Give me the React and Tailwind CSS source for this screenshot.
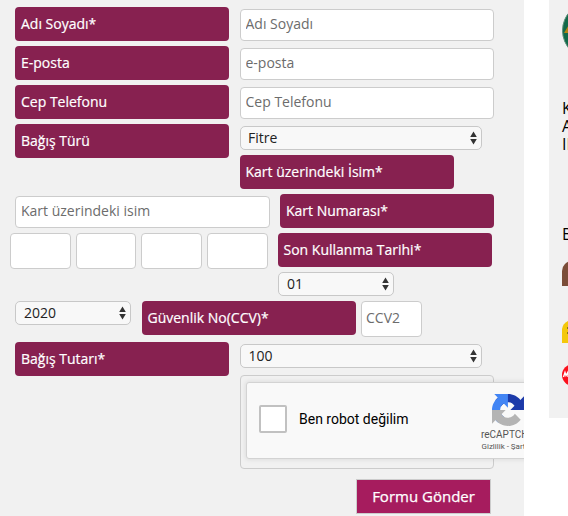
import clsx from "clsx";

function Label({ children, className }) {
  return (
    <label
      className={clsx(
        "block h-[34px] w-[214px] shrink-0 rounded-[4px] bg-[#872150] text-[14px] leading-[33px] text-white [-webkit-text-stroke:0.2px_white]",
        className
      )}
    >
      {children}
    </label>
  );
}

function Input({ className, placeholder }) {
  return (
    <input
      type="text"
      placeholder={placeholder}
      className={clsx(
        "block shrink-0 rounded-[4px] border border-[#ccc] bg-white pb-[3px] text-[14px] placeholder:text-[#6c6c6c] focus:outline-none",
        className
      )}
    />
  );
}

function Select({ value, className }) {
  return (
    <button
      type="button"
      className={clsx(
        "flex h-6 shrink-0 items-center justify-between rounded-[5px] border border-[#c8c8c8] bg-[#f8f8f8] pr-1 text-[14px] leading-[22px] text-[#222]",
        className
      )}
    >
      <span>{value}</span>
      <svg width="7" height="14" viewBox="0 0 7 14" fill="#333">
        <path d="M3.5 .6L6.8 6H.2zM3.5 13.4L6.8 8H.2z" />
      </svg>
    </button>
  );
}

function RecaptchaLogo() {
  return (
    <svg width="32" height="32" viewBox="0 0 64 64">
      <path
        fill="#1c3aa9"
        d="M64 31.955l-.033-1.37V4.687l-7.16 7.16C50.948 4.674 42.033.093 32.05.093c-10.4 0-19.622 4.96-25.458 12.64l11.736 11.86a15.55 15.55 0 0 1 4.754-5.334c2.05-1.6 4.952-2.906 8.968-2.906.485 0 .86.057 1.135.163 4.976.393 9.288 3.14 11.828 7.124l-8.307 8.307L64 31.953"
      />
      <path
        fill="#4285f4"
        d="M31.862.094l-1.37.033H4.594l7.16 7.16C4.58 13.147 0 22.06 0 32.046c0 10.4 4.96 19.622 12.64 25.458L24.5 45.768a15.55 15.55 0 0 1-5.334-4.754c-1.6-2.05-2.906-4.952-2.906-8.968 0-.485.057-.86.163-1.135.393-4.976 3.14-9.288 7.124-11.828l8.307 8.307L31.86.095"
      />
      <path
        fill="#b4b4b4"
        d="M.001 32.045l.033 1.37v25.898l7.16-7.16c5.86 7.173 14.774 11.754 24.76 11.754 10.4 0 19.622-4.96 25.458-12.64l-11.736-11.86a15.55 15.55 0 0 1-4.754 5.334c-2.05 1.6-4.952 2.906-8.968 2.906-.485 0-.86-.057-1.135-.163-4.976-.393-9.288-3.14-11.828-7.124l8.307-8.307c-10.522.04-22.4.066-27.295-.005"
      />
    </svg>
  );
}

function Recaptcha() {
  return (
    <div className="flex h-[77px] w-[304px] rounded-[3px] border border-[#d3d3d3] bg-[#f9f9f9] font-[Roboto,sans-serif] shadow-[0_0_4px_1px_rgba(0,0,0,0.08)]">
      <div className="mt-[22px] ml-3 size-7 shrink-0 rounded-[2px] border-2 border-[#c1c1c1] bg-white" />
      <span className="mt-[28px] ml-3 w-[167px] shrink-0 text-[14px] leading-[17px] text-black">
        Ben robot değilim
      </span>
      <div className="flex w-[84px] shrink-0 flex-col items-center pt-[11px] text-[#555]">
        <RecaptchaLogo />
        <span className="mt-[2px] text-[10px] leading-[14px]">reCAPTCHA</span>
        <span className="text-[8px] leading-[10px] whitespace-nowrap">Gizlilik - Şartlar</span>
      </div>
    </div>
  );
}

function DonationForm() {
  return (
    <form className="h-[516px] w-[524px] shrink-0 overflow-hidden bg-[#f1f1f1] pt-[7px]">
      <div className="flex flex-col gap-[5px] pl-[15px]">
        <div className="flex items-end gap-[11px]">
          <Label className="pl-[6px]">Adı Soyadı*</Label>
          <Input placeholder="Adı Soyadı" className="h-8 w-[254px] pl-[4.5px]" />
        </div>
        <div className="flex items-end gap-[11px]">
          <Label className="pl-[6px]">E-posta</Label>
          <Input placeholder="e-posta" className="h-8 w-[254px] pl-[4.5px]" />
        </div>
        <div className="flex items-end gap-[11px]">
          <Label className="pl-[6px]">Cep Telefonu</Label>
          <Input placeholder="Cep Telefonu" className="h-8 w-[254px] pl-[4.5px]" />
        </div>
        <div className="flex items-start gap-[11px]">
          <Label className="pl-[6px]">Bağış Türü</Label>
          <Select value="Fitre" className="mt-[2px] w-[242px] pl-[7px]" />
        </div>
        <Label className="-mt-2 ml-[225px] pl-[5.5px]">Kart üzerindeki İsim*</Label>
        <div className="flex items-end gap-[10px]">
          <Input placeholder="Kart üzerindeki isim" className="h-8 w-[255px] pl-[5px]" />
          <Label className="pl-[6px]">Kart Numarası*</Label>
        </div>
      </div>

      <div className="mt-[5px] flex h-9 items-start pl-[10px]">
        <Input className="mr-[5px] h-9 w-[61px]" />
        <Input className="mr-[5px] h-9 w-[60px]" />
        <Input className="mr-[5px] h-9 w-[61px]" />
        <Input className="mr-[10px] h-9 w-[61px]" />
        <Label className="pl-[5.5px]">Son Kullanma Tarihi*</Label>
      </div>
      <Select value="01" className="mt-[3px] ml-[278px] w-[116px] pl-2" />
      <div className="mt-[5px] flex items-start pl-[15px]">
        <Select value="2020" className="w-[116px] pl-2" />
        <Label className="mr-[5px] ml-[11px] pl-[5.5px]">Güvenlik No(CCV)*</Label>
        <Input placeholder="CCV2" className="h-9 w-[61px] pl-[4px]" />
      </div>

      <div className="mt-[5px] flex items-start gap-[11px] pl-[15px]">
        <Label className="pl-[6px]">Bağış Tutarı*</Label>
        <Select value="100" className="mt-[2px] w-[242px] pl-[7.5px]" />
      </div>
      <div className="-mt-px ml-[240px] h-[94px] w-[254px] rounded-[4px] border border-[#ccc] pt-[6px] pl-[5px]">
        <Recaptcha />
      </div>
      <button
        type="button"
        className="mt-[10px] ml-[356px] block h-[35px] w-[135px] border border-[#ccc] bg-[#a61c5e] text-[15px] leading-[33px] text-white [-webkit-text-stroke:0.25px_white]"
      >
        Formu Gönder
      </button>
    </form>
  );
}

function Sidebar() {
  return (
    <aside className="ml-[25px] h-[418px] w-[260px] shrink-0 bg-[#f1f1f1] pt-0.5 pl-[13px] text-[16px] leading-[18px] text-black">
      <svg className="block" width="57" height="57" viewBox="0 0 57 57">
        <circle cx="28.5" cy="28.5" r="28" fill="#13694a" stroke="#5c8f79" />
        <path d="M2 31L9 19v12z" fill="#b58414" />
      </svg>
      <div className="mt-[40px]">
        <p>K</p>
        <p>A</p>
        <p>IB</p>
      </div>
      <p className="mt-[72px]">B</p>
      <div className="mt-[18px] h-[25px] w-[50px] rounded-tl-[10px] bg-[#7b4d38]" />
      <svg className="mt-[34px] block" width="50" height="23">
        <path d="M0 23V9Q1 2 9 0h41v23z" fill="#f4c80b" />
        <path d="M5 8h8M5 13h8" stroke="#8e7616" strokeWidth="2" />
      </svg>
      <svg className="mt-[21px] block" width="22" height="22" viewBox="0 0 22 22">
        <circle cx="11" cy="11" r="11" fill="#fb0f1b" />
        <path d="M1.5 13L3 8.5l1 3L6 8v5" fill="none" stroke="#fff" strokeWidth="1.4" />
      </svg>
    </aside>
  );
}

export default function App() {
  return (
    <div className="flex h-[516px] w-[568px] items-start overflow-hidden bg-white font-['Open_Sans',sans-serif]">
      <DonationForm />
      <Sidebar />
    </div>
  );
}
